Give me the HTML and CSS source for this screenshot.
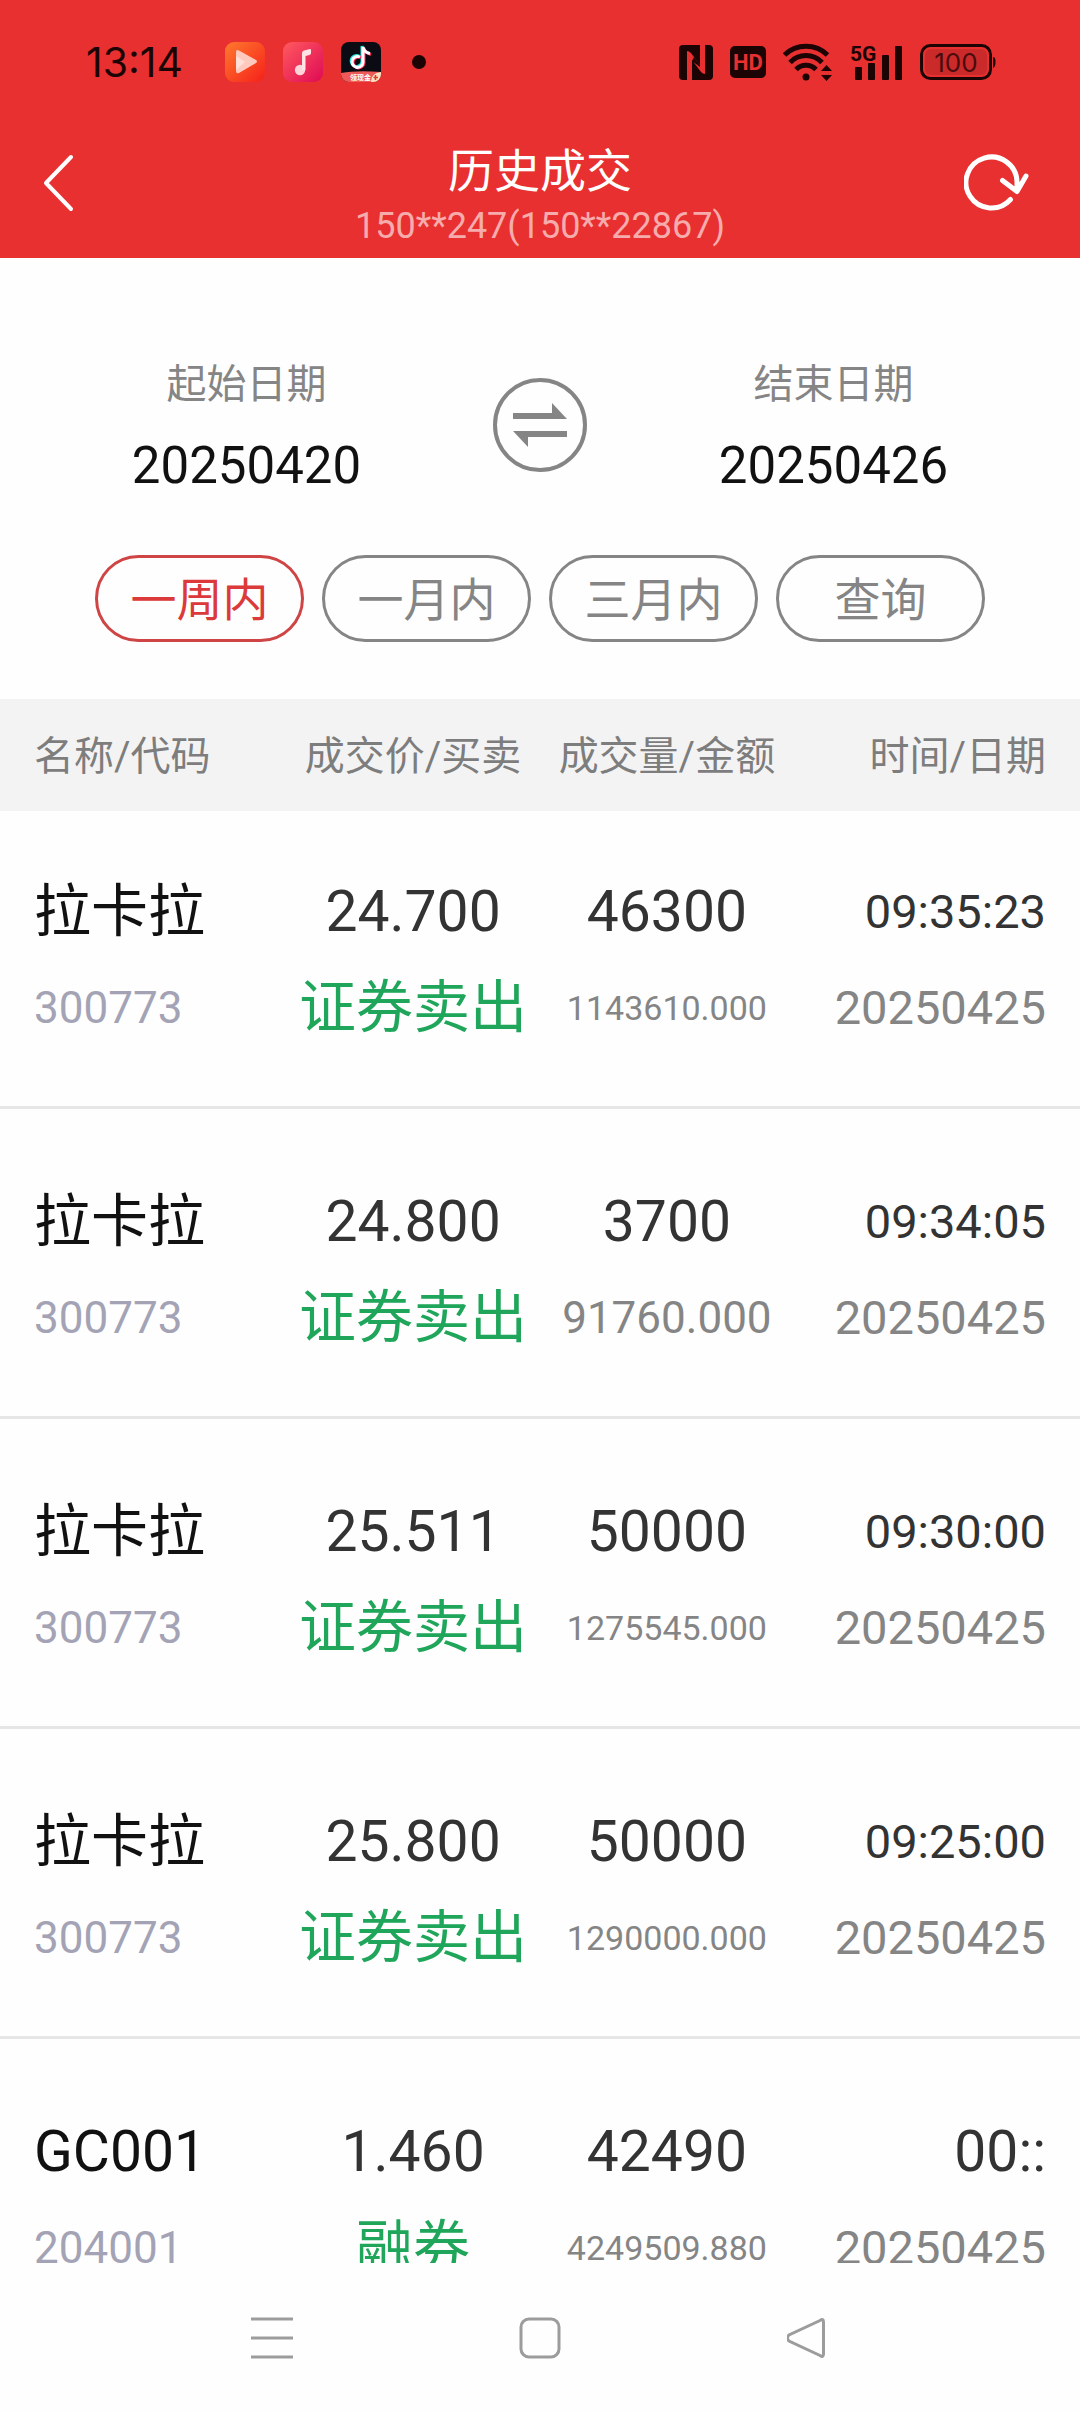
FILE: index.html
```html
<!DOCTYPE html>
<html lang="zh-CN">
<head>
    <meta charset="UTF-8">
    <meta name="viewport" content="width=device-width, initial-scale=1">
    <title>历史成交</title>
    <link rel="stylesheet" href="styles.css">
</head>
<body>
    <div class="root">
        <header class="header">
            <div class="status">
                <span class="clock">13:14</span>
                <div class="apps">
                    <svg width="40" height="40" viewBox="0 0 40 40">
                        <defs>
                            <linearGradient id="orange" x1="0" y1="0" x2="1" y2="1">
                                <stop offset="0" stop-color="#ff7a2e"/>
                                <stop offset="1" stop-color="#f5201a"/>
                            </linearGradient>
                        </defs>
                        <rect width="40" height="40" rx="9" fill="url(#orange)"/>
                        <path d="M14 8.500L31 18Q33 19.500 31 21L14 31Q11 32 11 29V10Q11 7 14 8.500Z" fill="#ffc9bd"/>
                        <path d="M11 14L20 20L11 28Z" fill="#ffe0d8"/>
                    </svg>
                    <svg width="40" height="40" viewBox="0 0 40 40">
                        <defs>
                            <linearGradient id="pink" x1="0" y1="0" x2="1" y2="1">
                                <stop offset="0" stop-color="#ff5a5f"/>
                                <stop offset="1" stop-color="#df0a55"/>
                            </linearGradient>
                        </defs>
                        <rect width="40" height="40" rx="9" fill="url(#pink)"/>
                        <circle cx="17" cy="28" r="5.200" fill="#ffd3da"/>
                        <path d="M19 28V11Q19 9 21 8.500L27 7Q28 7 28 8V11Q28 12.500 26.500 13L22.500 14V28Z" fill="#ffe3e7"/>
                    </svg>
                    <svg width="40" height="40" viewBox="0 0 40 40">
                        <defs>
                            <clipPath id="tile"><rect width="40" height="40" rx="8"/></clipPath>
                        </defs>
                        <g clip-path="url(#tile)">
                            <rect width="40" height="40" fill="#0b0b14"/>
                            <g fill="none" stroke-width="3">
                                <path d="M18 14A5.500 5.500 0 1 0 21 20V4Q22 10 28 11" stroke="#25e5e0"/>
                                <path d="M20 15.500A5.500 5.500 0 1 0 23 21V6Q24 11 30 12.500" stroke="#fb2b5a"/>
                                <path d="M19 15A5.500 5.500 0 1 0 22 20.500V5Q23 10.500 29 11.500" stroke="#fff"/>
                            </g>
                            <path d="M0 31Q16 28 40 30V40H0Z" fill="#ee5a58"/>
                            <path d="M30 40Q30 31 40 30V40Z" fill="#ffe0c0"/>
                            <path d="M34.500 33V38M32.500 35.500H37" stroke="#d8402c" stroke-width="1.500"/>
                            <text class="ribbon" x="9" y="38">领现金</text>
                        </g>
                    </svg>
                </div>
                <i class="dot"></i>
                <div class="signals">
                    <svg width="34" height="35" viewBox="0 0 34 35">
                        <path d="M4 0H21V20L12 8Q10 6 8 6V35H4Q0 35 0 31V4Q0 0 4 0Z" fill="#1c0404"/>
                        <path d="M26 0H30Q34 0 34 4V31Q34 35 30 35H13V15L22 27Q24 29 26 29Z" fill="#1c0404"/>
                        <path d="M15 12L21 20V22L13 16Z" fill="#1c0404"/>
                    </svg>
                    <svg width="36" height="32" viewBox="0 0 36 32">
                        <rect width="36" height="32" rx="5" fill="#1c0404"/>
                        <text class="hd" x="18" y="24" text-anchor="middle">HD</text>
                    </svg>
                    <svg width="50" height="38" viewBox="0 0 50 38">
                        <g fill="none" stroke="#1c0404" stroke-width="5">
                            <path d="M1.500 12A31 31 0 0 1 44.500 12"/>
                            <path d="M7 19.500A22 22 0 0 1 39 19.500"/>
                            <path d="M13 26.500A14 14 0 0 1 33 26.500"/>
                        </g>
                        <circle cx="23" cy="34" r="3.500" fill="#1c0404"/>
                        <path d="M38 28L43.500 22L49 28ZM38 32L43.500 38L49 32Z" fill="#1c0404"/>
                    </svg>
                    <svg width="53" height="38" viewBox="0 0 53 38">
                        <text class="net" x="0" y="18">5G</text>
                        <g fill="#1c0404">
                            <rect x="5" y="24" width="7" height="13" rx="1"/>
                            <rect x="18" y="20" width="7" height="17" rx="1"/>
                            <rect x="32" y="12" width="7" height="25" rx="1"/>
                            <rect x="45" y="3" width="7" height="34" rx="1"/>
                        </g>
                    </svg>
                    <svg width="76" height="36" viewBox="0 0 76 36">
                        <rect x="1.500" y="1.500" width="69" height="33" rx="9" fill="none" stroke="#1c0404" stroke-width="3"/>
                        <rect x="5" y="5" width="62" height="26" rx="6" fill="#cb2a2b"/>
                        <path d="M73 13Q75.500 13 75.500 18T73 24Z" fill="#1c0404"/>
                        <text class="charge" x="36" y="28" text-anchor="middle">100</text>
                    </svg>
                </div>
            </div>
            <div class="navbar">
                <button class="icon_btn" type="button" aria-label="返回">
                    <svg width="34" height="60" viewBox="0 0 34 60">
                        <path d="M31 4L6 30L31 56" fill="none" stroke="#fff" stroke-width="4" stroke-linecap="round" stroke-linejoin="round"/>
                    </svg>
                </button>
                <div class="heading">
                    <h1 class="title">历史成交</h1>
                    <p class="account">150**247(150**22867)</p>
                </div>
                <button class="icon_btn" type="button" aria-label="刷新">
                    <svg width="66" height="60" viewBox="0 0 66 60">
                        <path d="M46.500 46.500A25.500 25.500 0 1 1 53 29V37M38.500 27.500L53 38.500L62 23" fill="none" stroke="#fff" stroke-width="5" stroke-linecap="round" stroke-linejoin="round"/>
                    </svg>
                </button>
            </div>
        </header>

        <form class="search">
            <div class="range">
                <div class="date">
                    <label for="start">起始日期</label>
                    <input id="start" type="text" value="20250420" readonly>
                </div>
                <button class="swap" type="button" aria-label="交换">
                    <svg width="94" height="94" viewBox="0 0 94 94">
                        <circle cx="47" cy="47" r="45" fill="none" stroke="#858585" stroke-width="4"/>
                        <path d="M20 35H59V25L74 41H20ZM20 53H74V59H35V69L20 53Z" fill="#858585"/>
                    </svg>
                </button>
                <div class="date">
                    <label for="end">结束日期</label>
                    <input id="end" type="text" value="20250426" readonly>
                </div>
            </div>
            <div class="periods">
                <button class="period active" type="button">一周内</button>
                <button class="period" type="button">一月内</button>
                <button class="period" type="button">三月内</button>
                <button class="period" type="button">查询</button>
            </div>
        </form>

        <main class="list">
            <table class="deals">
                <thead>
                    <tr>
                        <th>名称/代码</th>
                        <th>成交价/买卖</th>
                        <th>成交量/金额</th>
                        <th>时间/日期</th>
                    </tr>
                </thead>
                <tbody>
                    <tr>
                        <td><div class="name">拉卡拉</div><div class="code">300773</div></td>
                        <td><div class="num">24.700</div><div class="sell">证券卖出</div></td>
                        <td><div class="num">46300</div><div class="amount small">1143610.000</div></td>
                        <td><div class="time">09:35:23</div><div class="day">20250425</div></td>
                    </tr>
                    <tr>
                        <td><div class="name">拉卡拉</div><div class="code">300773</div></td>
                        <td><div class="num">24.800</div><div class="sell">证券卖出</div></td>
                        <td><div class="num">3700</div><div class="amount">91760.000</div></td>
                        <td><div class="time">09:34:05</div><div class="day">20250425</div></td>
                    </tr>
                    <tr>
                        <td><div class="name">拉卡拉</div><div class="code">300773</div></td>
                        <td><div class="num">25.511</div><div class="sell">证券卖出</div></td>
                        <td><div class="num">50000</div><div class="amount small">1275545.000</div></td>
                        <td><div class="time">09:30:00</div><div class="day">20250425</div></td>
                    </tr>
                    <tr>
                        <td><div class="name">拉卡拉</div><div class="code">300773</div></td>
                        <td><div class="num">25.800</div><div class="sell">证券卖出</div></td>
                        <td><div class="num">50000</div><div class="amount small">1290000.000</div></td>
                        <td><div class="time">09:25:00</div><div class="day">20250425</div></td>
                    </tr>
                    <tr>
                        <td><div class="name">GC001</div><div class="code">204001</div></td>
                        <td><div class="num">1.460</div><div class="sell">融券</div></td>
                        <td><div class="num">42490</div><div class="amount small">4249509.880</div></td>
                        <td><div class="num">00::</div><div class="day">20250425</div></td>
                    </tr>
                </tbody>
            </table>
        </main>

        <nav class="keys">
            <button class="key" type="button" aria-label="菜单">
                <svg width="42" height="42" viewBox="0 0 42 42">
                    <path d="M0 2H42M0 21H42M0 40H42" stroke="#9c9c9c" stroke-width="3"/>
                </svg>
            </button>
            <button class="key" type="button" aria-label="主页">
                <svg width="42" height="42" viewBox="0 0 42 42">
                    <rect x="2" y="2" width="38" height="38" rx="8" fill="none" stroke="#9c9c9c" stroke-width="3"/>
                </svg>
            </button>
            <button class="key" type="button" aria-label="后退">
                <svg width="42" height="42" viewBox="0 0 42 42">
                    <path d="M33 3.500Q36.500 1 36.500 5V37Q36.500 41 33 38.500L2 24Q-1 21 2 18Z" fill="none" stroke="#9c9c9c" stroke-width="3"/>
                </svg>
            </button>
        </nav>
    </div>
</body>
</html>
```

FILE: styles.css
```css
* {
    box-sizing: border-box;
}
body {
    margin: 0;
    background-color: #fefefe;
    color: #333;
    font-family: Roboto, "Noto Sans CJK SC", sans-serif;
}
button {
    padding: 0;
    border: 0;
    background: none;
    font-family: inherit;
}
svg {
    display: block;
}
.root {
    display: flex;
    flex-direction: column;
    height: 100vh;
}

/* header */
.header {
    flex: none;
    background-color: #e83030;
    color: #fff;
}
.status {
    display: flex;
    align-items: center;
    height: 107px;
    padding: 17px 84px 0 86px;
}
.clock {
    color: #1c0404;
    font-family: Inter, sans-serif;
    font-size: 41px;
    line-height: 48px;
}
.apps {
    display: flex;
    gap: 18px;
    margin-left: 42px;
}
.dot {
    width: 14px;
    height: 14px;
    margin-left: 31px;
    border-radius: 50%;
    background-color: #1c0404;
}
.signals {
    display: flex;
    align-items: center;
    gap: 17px;
    margin-left: auto;
}
.ribbon {
    fill: #fff;
    font-size: 7px;
    font-weight: bold;
}
.hd {
    fill: #e83030;
    font-size: 22px;
    font-weight: bold;
}
.net {
    fill: #1c0404;
    font-size: 21px;
    font-weight: bold;
}
.charge {
    fill: #4a0c0c;
    font-family: Inter, sans-serif;
    font-size: 26px;
}
.navbar {
    display: flex;
    align-items: center;
    justify-content: space-between;
    height: 151px;
    padding: 0 40px;
}
.icon_btn {
    display: flex;
    width: 76px;
}
.heading {
    padding-top: 27px;
    text-align: center;
}
.title {
    margin: 0;
    font-size: 46px;
    font-weight: normal;
    line-height: 60px;
}
.account {
    margin: 0;
    color: #f6acac;
    font-size: 36px;
    line-height: 50px;
}

/* date range */
.search {
    flex: none;
    padding: 94px 0 57px;
}
.range {
    display: flex;
    align-items: center;
}
.date {
    display: flex;
    flex: 1;
    flex-direction: column;
    gap: 14px;
    min-width: 0;
    text-align: center;
}
.date label {
    color: #858585;
    font-size: 40px;
    line-height: 66px;
}
.date input {
    width: 100%;
    height: 66px;
    padding: 0;
    border: 0;
    outline: 0;
    background: none;
    color: #111;
    font-family: inherit;
    font-size: 51px;
    text-align: center;
}
.periods {
    display: flex;
    gap: 18px;
    margin-top: 57px;
    padding: 0 95px;
}
.period {
    flex: 1;
    height: 87px;
    padding-bottom: 6px;
    border: 3px solid #858585;
    border-radius: 44px;
    color: #858585;
    font-size: 46px;
}
.period.active {
    border-color: #cf4444;
    color: #dc3a3a;
}

/* deals */
.list {
    flex: 1;
    min-height: 0;
    overflow: hidden;
}
.deals {
    width: 100%;
    border-collapse: collapse;
    table-layout: fixed;
    text-align: center;
}
.deals th {
    width: 23.5%;
    height: 112px;
    padding: 0 0 4px;
    background-color: #f3f3f3;
    color: #7d7d7d;
    font-size: 40px;
    font-weight: normal;
    white-space: nowrap;
}
.deals th:first-child,
.deals th:last-child {
    width: 26.5%;
}
.deals td {
    padding: 73px 0 58px;
    border-bottom: 3px solid #e6e6e6;
    line-height: 80px;
    white-space: nowrap;
}
.deals tr:first-child td {
    padding-top: 61px;
}
.deals th:first-child,
.deals td:first-child {
    padding-left: 34px;
    text-align: left;
}
.deals th:last-child,
.deals td:last-child {
    padding-right: 34px;
    text-align: right;
}
.name,
.num,
.time {
    margin-bottom: 16px;
}
.name,
.num,
.sell {
    font-size: 57px;
}
.name {
    color: #111;
}
.sell {
    color: #1fa65a;
}
.code,
.amount {
    font-size: 44px;
}
.code {
    color: #a3a3b5;
}
.amount,
.day {
    color: #858585;
}
.small {
    font-size: 34px;
}
.time,
.day {
    font-size: 47px;
}

/* system keys */
.keys {
    display: flex;
    flex: none;
    align-items: center;
    justify-content: space-between;
    height: 149px;
    padding: 0 251px;
}
.key {
    display: flex;
}
```
